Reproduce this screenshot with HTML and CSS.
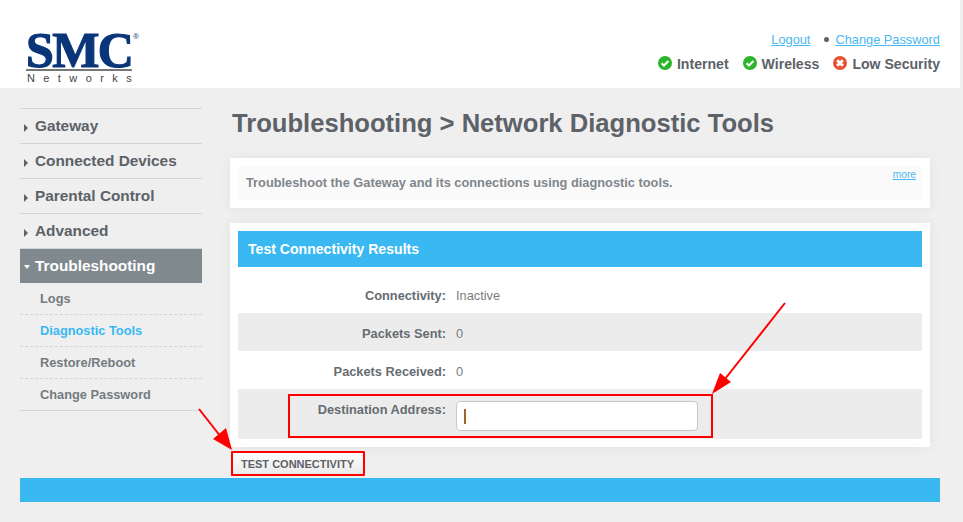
FILE: index.html
```html
<!DOCTYPE html>
<html lang="en">
<head>
<meta charset="utf-8">
<title>Network Diagnostic Tools</title>
<link rel="stylesheet" href="styles.css">
</head>
<body>
<div class="page">
  <header class="header">
    <div class="logo">
      <div class="logo-mark">SMC<sup class="logo-reg">®</sup></div>
      <div class="logo-sub">Networks</div>
    </div>
    <div class="header-right">
      <div class="user-links">
        <a href="#" class="link">Logout</a>
        <span class="dot"></span>
        <a href="#" class="link">Change Password</a>
      </div>
      <div class="status-row">
        <span class="status">
          <svg class="status-icon" viewBox="0 0 14 14"><circle cx="7" cy="7" r="7" fill="#2ab52a"/><path d="M3.6 7.2 6 9.6l4.4-4.6" fill="none" stroke="#fff" stroke-width="2.1"/></svg>
          Internet
        </span>
        <span class="status">
          <svg class="status-icon" viewBox="0 0 14 14"><circle cx="7" cy="7" r="7" fill="#2ab52a"/><path d="M3.6 7.2 6 9.6l4.4-4.6" fill="none" stroke="#fff" stroke-width="2.1"/></svg>
          Wireless
        </span>
        <span class="status">
          <svg class="status-icon" viewBox="0 0 14 14"><circle cx="7" cy="7" r="7" fill="#e8502f"/><path d="M4.2 4.2l5.6 5.6M9.8 4.2l-5.6 5.6" fill="none" stroke="#fff" stroke-width="2.8"/></svg>
          Low Security
        </span>
      </div>
    </div>
  </header>

  <div class="main">
    <nav class="sidebar">
      <div class="nav-item"><span class="tri"></span>Gateway</div>
      <div class="nav-item"><span class="tri"></span>Connected Devices</div>
      <div class="nav-item"><span class="tri"></span>Parental Control</div>
      <div class="nav-item"><span class="tri"></span>Advanced</div>
      <div class="nav-item nav-open"><span class="tri-down"></span>Troubleshooting</div>
      <div class="sub-item">Logs</div>
      <div class="sub-item sub-active">Diagnostic Tools</div>
      <div class="sub-item">Restore/Reboot</div>
      <div class="sub-item sub-last">Change Password</div>
    </nav>

    <main class="content">
      <h1 class="title">Troubleshooting &gt; Network Diagnostic Tools</h1>

      <section class="card intro-card">
        <div class="intro">
          <p class="intro-text">Troubleshoot the Gateway and its connections using diagnostic tools.</p>
          <a href="#" class="more">more</a>
        </div>
      </section>

      <section class="card results-card">
        <h2 class="card-head">Test Connectivity Results</h2>
        <div class="row">
          <span class="row-label">Connectivity:</span><span class="row-value">Inactive</span>
        </div>
        <div class="row row-alt">
          <span class="row-label">Packets Sent:</span><span class="row-value">0</span>
        </div>
        <div class="row">
          <span class="row-label">Packets Received:</span><span class="row-value">0</span>
        </div>
        <div class="row row-alt row-input">
          <span class="row-label">Destination Address:</span>
          <span class="input-wrap"><input class="text-input" type="text" aria-label="Destination Address"><span class="caret"></span></span>
        </div>
      </section>

      <button class="action" type="button">TEST CONNECTIVITY</button>
    </main>
  </div>

  <div class="footer-bar"></div>

  <div class="mark mark-field"></div>
  <div class="mark mark-button"></div>
  <svg class="arrows" viewBox="0 0 963 522" aria-hidden="true">
    <path d="M785 303 725 379" stroke="#f00" stroke-width="2" fill="none"/>
    <path d="M712 394 720 373 731 382Z" fill="#f00"/>
    <path d="M199 409 221 437" stroke="#f00" stroke-width="2" fill="none"/>
    <path d="M232 450 213 439 226 428Z" fill="#f00"/>
  </svg>
</div>
</body>
</html>
```

FILE: styles.css
```css
* { box-sizing: border-box; }
html, body { margin: 0; padding: 0; background: #efefef; }
body { font-family: "Liberation Sans", Arial, sans-serif; color: #5c6268; }
.page { position: relative; width: 963px; height: 522px; overflow: hidden; }

.header {
  width: 960px; height: 88px; background: #fff;
  display: flex; justify-content: space-between; padding: 32px 20px 0 25px;
}
.logo { width: 115px; }
.logo-mark {
  font-family: "Liberation Serif", serif; font-weight: 700; font-size: 50px; line-height: 36px;
  letter-spacing: -1.6px; color: #0b3579; white-space: nowrap; height: 39px;
  -webkit-text-stroke: 1.2px #0b3579;
  border-bottom: 2px solid #777; margin-left: 1px; width: 106px; position: relative;
}
.logo-reg {
  position: absolute; left: 107px; top: 1px; font-size: 8px; line-height: 8px; letter-spacing: 0;
  font-family: "Liberation Sans", sans-serif; font-weight: 400; -webkit-text-stroke: 0;
}
.logo-sub {
  font-size: 11px; line-height: 12px; margin-top: 1px; letter-spacing: 8.4px; color: #444; white-space: nowrap;
  padding-left: 2px;
}

.header-right { display: flex; flex-direction: column; align-items: flex-end; }
.user-links { display: flex; align-items: center; height: 15px; font-size: 12.8px; color: #5c6268; }
.link { color: #4ab8f0; text-decoration: underline; }
.dot { width: 5px; height: 5px; border-radius: 50%; background: #5c6268; margin: 0 6px 0 14px; }
.status-row { display: flex; gap: 14px; margin-top: 9px; }
.status { display: flex; align-items: center; gap: 5px; font-size: 14.08px; font-weight: 700; line-height: 16px; }
.status-icon { width: 14px; height: 14px; margin-top: -2px; }

.main { display: flex; padding: 20px 0 0 20px; }
.sidebar { width: 182px; border-top: 1px solid #d5d5d5; margin-right: 28px; align-self: flex-start; }
.nav-item {
  height: 35px; display: flex; align-items: center; font-size: 15.36px; font-weight: 700; color: #5c6268;
  padding: 0 0 1px 15px; border-bottom: 1px solid #d5d5d5; position: relative;
}
.nav-open { background: #80898e; color: #fff; height: 34px; border-bottom: 0; }
.tri {
  position: absolute; left: 4px; top: 15px; width: 0; height: 0;
  border-left: 4px solid #5c6268; border-top: 4px solid transparent; border-bottom: 4px solid transparent;
}
.tri-down {
  position: absolute; left: 4px; top: 16px; width: 0; height: 0;
  border-top: 4px solid #fff; border-left: 3.5px solid transparent; border-right: 3.5px solid transparent;
}
.sub-item {
  height: 32px; padding-left: 20px; display: flex; align-items: center; font-size: 12.8px; font-weight: 700;
  color: #757b80; border-bottom: 1px dashed #d5d5d5;
}
.sub-active { color: #39b8f2; }
.sub-last { border-bottom: 1px solid #d5d5d5; }

.content { width: 700px; }
.title { margin: 0; height: 50px; padding: 0 0 0 2px; font-size: 25.6px; line-height: 30px; font-weight: 700; color: #5c6268; }
.card { background: #fff; padding: 8px; box-shadow: 0 0 12px rgba(0,0,0,.06); }
.intro { background: #fafafa; height: 34px; display: flex; justify-content: space-between; padding: 0 6px 0 8px; position: relative; }
.intro-text { margin: 0; padding-top: 9px; font-size: 12.8px; line-height: 16px; font-weight: 700; color: #80868b; }
.more { font-size: 10.24px; line-height: 12px; padding-top: 3px; color: #4ab8f0; text-decoration: underline; }
.results-card { margin-top: 15px; height: 224px; }
.card-head { margin: 0 0 8px; height: 36px; background: #39b8f2; color: #fff; font-size: 14.08px; font-weight: 700; line-height: 36px; padding-left: 10px; }
.row { display: flex; height: 38px; align-items: center; gap: 10px; padding-top: 2px; font-size: 12.8px; }
.row-alt { background: #ececec; }
.row-label { width: 208px; text-align: right; font-weight: 700; color: #666c72; }
.row-value { color: #777d83; }
.row-input { height: 50px; align-items: flex-start; padding-top: 12px; }
.input-wrap { position: relative; display: block; }
.text-input {
  display: block; width: 242px; height: 30px; background: #fff; border: 1px solid #c6c8cc; border-radius: 4px;
  padding: 0; outline: 0; font-size: 13px;
}
.row-input .row-label { line-height: 16px; margin-top: 1px; }
.caret { position: absolute; left: 8px; top: 8px; width: 2px; height: 15px; background: #a3622a; }
.action {
  display: block; margin: 4px 0 0 1px; width: 133px; height: 25px; padding: 0; border: 0; background: linear-gradient(#fff, #e9e9e9);
  font-family: "Liberation Sans", sans-serif; font-size: 11px; font-weight: 700; color: #5c6268;
}

.footer-bar { position: absolute; left: 20px; top: 478px; width: 920px; height: 24px; background: #39b8f2; }

.mark { position: absolute; border: 2px solid #f00; }
.mark-field { left: 288px; top: 394px; width: 425px; height: 44px; }
.mark-button { left: 231px; top: 451px; width: 134px; height: 25px; border-radius: 1px; }
.arrows { position: absolute; left: 0; top: 0; width: 963px; height: 522px; pointer-events: none; }
```
